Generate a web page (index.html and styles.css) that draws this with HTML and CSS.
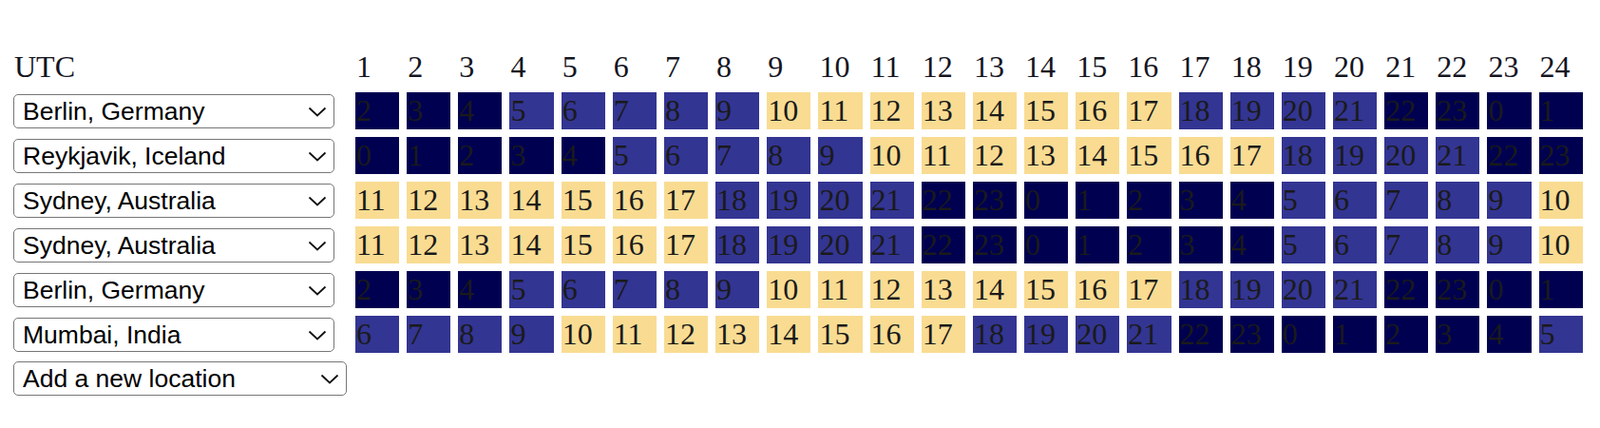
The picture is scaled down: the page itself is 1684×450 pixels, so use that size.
FILE: index.html
```html
<!DOCTYPE html>
<html lang="en">

<head>
    <meta charset="UTF-8">
    <meta name="viewport" content="width=device-width, initial-scale=1.0">
    <title>World Clock Planner</title>
    <link rel="stylesheet" href="styles.css">
</head>
<body>
    <div id="board" class="board">
        <div class="label">UTC</div>
    </div>
    <div class="picker picker-add">
        <select class="location location-add" aria-label="Add a new location">
            <option>Add a new location</option>
            <option>Berlin, Germany</option>
            <option>Reykjavik, Iceland</option>
            <option>Sydney, Australia</option>
            <option>Mumbai, India</option>
        </select>
        <svg class="chevron" width="20" height="11" viewBox="0 0 20 11" aria-hidden="true">
            <path d="M1.5 1.5 L10 9.5 L18.5 1.5" fill="none" stroke="#111" stroke-width="1.8"/>
        </svg>
    </div>
    <script>
        // Locations shown on the board, with their offset from the UTC row
        var locations = [
            { name: 'Berlin, Germany', offset: 1 },
            { name: 'Reykjavik, Iceland', offset: -1 },
            { name: 'Sydney, Australia', offset: 10 },
            { name: 'Sydney, Australia', offset: 10 },
            { name: 'Berlin, Germany', offset: 1 },
            { name: 'Mumbai, India', offset: 5 }
        ];
        var cities = ['Berlin, Germany', 'Reykjavik, Iceland', 'Sydney, Australia', 'Mumbai, India'];
        var chevron = '<svg class="chevron" width="20" height="11" viewBox="0 0 20 11" aria-hidden="true">' +
            '<path d="M1.5 1.5 L10 9.5 L18.5 1.5" fill="none" stroke="#111" stroke-width="1.8"/></svg>';

        // Pick a colour for a local hour
        function hourClass(hour) {
            if (hour >= 10 && hour <= 17) return 'day';
            if ((hour >= 5 && hour <= 9) || (hour >= 18 && hour <= 21)) return 'dusk';
            return 'night';
        }

        var board = document.getElementById('board');

        // Header row with UTC hours
        for (var h = 1; h <= 24; h++) {
            var head = document.createElement('div');
            head.className = 'label';
            head.textContent = h;
            board.appendChild(head);
        }

        // One row per location
        locations.forEach(function (loc) {
            var cell = document.createElement('div');
            cell.className = 'picker';
            var select = document.createElement('select');
            select.className = 'location';
            cities.forEach(function (city) {
                var option = document.createElement('option');
                option.textContent = city;
                if (city === loc.name) option.selected = true;
                select.appendChild(option);
            });
            cell.appendChild(select);
            cell.insertAdjacentHTML('beforeend', chevron);
            board.appendChild(cell);

            for (var h = 1; h <= 24; h++) {
                var local = ((h + loc.offset) % 24 + 24) % 24;
                var hour = document.createElement('div');
                hour.className = 'hour ' + hourClass(local);
                hour.textContent = local;
                board.appendChild(hour);
            }
        });
    </script>
</body>
</html>
```

FILE: styles.css
```css
body {
    margin: 0;
    padding: 52px 14px 20px;
    background-color: #fff;
    font-family: 'Liberation Serif', 'Times New Roman', serif;
    color: #111;
}

.board {
    display: grid;
    grid-template-columns: 352px repeat(24, 46.17px);
    grid-auto-rows: 39px;
    grid-template-rows: 37px;
    gap: 8px;
}

.label {
    font-size: 32px;
    line-height: 37px;
    padding-left: 1px;
    color: #15151f;
}

.picker {
    position: relative;
    width: 338px;
    height: 36px;
    margin-top: 2px;
}

.picker-add {
    width: 351px;
    margin-top: 9px;
}

.chevron {
    position: absolute;
    right: 8px;
    top: 13px;
    pointer-events: none;
}

.location {
    -webkit-appearance: none;
    appearance: none;
    box-sizing: border-box;
    font-family: 'Liberation Sans', Arial, sans-serif;
    font-size: 26.5px;
    width: 100%;
    height: 36px;
    margin: 0;
    padding: 0 0 0 9px;
    color: #000;
    background-color: #fff;
    border: 1.5px solid #767676;
    border-radius: 5px;
}

.hour {
    font-size: 32px;
    line-height: 37px;
    padding: 1px 0 1px 1px;
    color: #1a1a1a;
}

.night {
    background-color: #000050;
}

.dusk {
    background-color: #333592;
}

.day {
    background-color: #f9dc92;
}
```
